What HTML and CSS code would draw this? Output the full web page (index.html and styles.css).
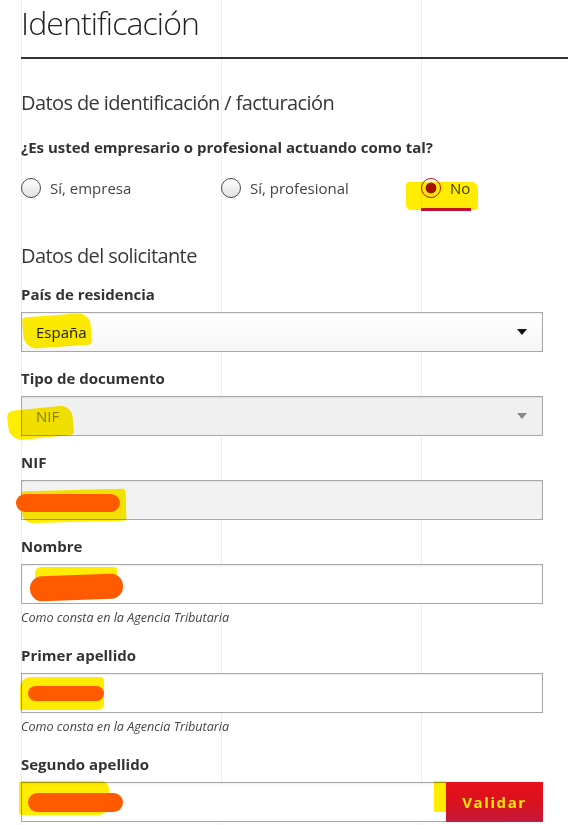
FILE: index.html
```html
<!DOCTYPE html>
<html lang="es">
<head>
<meta charset="utf-8">
<title>Identificación</title>
<link rel="stylesheet" href="styles.css">
</head>
<body>
<div class="page">
  <h1 class="title">Identificación</h1>

  <h2 class="section">Datos de identificación / facturación</h2>
  <p class="question">¿Es usted empresario o profesional actuando como tal?</p>
  <div class="radios">
    <label class="radio"><span class="dot"></span>Sí, empresa</label>
    <label class="radio"><span class="dot"></span>Sí, profesional</label>
    <label class="radio checked"><span class="dot"></span>No</label>
  </div>

  <h2 class="section section-2">Datos del solicitante</h2>

  <div class="field first">
    <div class="label">País de residencia</div>
    <div class="select"><span>España</span><span class="arrow"></span></div>
  </div>

  <div class="field">
    <div class="label">Tipo de documento</div>
    <div class="select disabled"><span>NIF</span><span class="arrow"></span></div>
  </div>

  <div class="field">
    <div class="label">NIF</div>
    <div class="input disabled"></div>
  </div>

  <div class="field">
    <div class="label">Nombre</div>
    <div class="input"></div>
    <div class="hint">Como consta en la Agencia Tributaria</div>
  </div>

  <div class="field">
    <div class="label">Primer apellido</div>
    <div class="input"></div>
    <div class="hint">Como consta en la Agencia Tributaria</div>
  </div>

  <div class="field">
    <div class="label">Segundo apellido</div>
    <div class="input-row">
      <div class="input grow"></div>
      <button class="btn">Validar</button>
    </div>
  </div>

  <div class="marks">
    <span class="hl hl-no"></span>
    <span class="underline-no"></span>
    <span class="hl hl-espana"></span>
    <span class="hl hl-nif"></span>
    <span class="hl hl-nifin"></span>
    <span class="rd rd-nifin"></span>
    <span class="hl hl-nombre"></span>
    <span class="rd rd-nombre"></span>
    <span class="hl hl-primer"></span>
    <span class="rd rd-primer"></span>
    <span class="hl hl-segundo"></span>
    <span class="rd rd-segundo"></span>
    <span class="hl hl-validar"></span>
  </div>
</div>
</body>
</html>
```

FILE: styles.css
```css
html, body {
  margin: 0;
  padding: 0;
  background: #fff;
}

body {
  font-family: "Open Sans", "Liberation Sans", sans-serif;
  color: #333;
  overflow: hidden;
}

.page {
  position: relative;
  height: 825px;
  box-sizing: border-box;
  padding-left: 21px;
  overflow: hidden;
  background-image: linear-gradient(to right, #ededed 0, #ededed 1px, transparent 1px);
  background-size: 200px 100%;
  background-position: 21px 0;
  background-repeat: repeat-x;
}

.title {
  margin: 0;
  padding: 3px 0 14px;
  font-size: 32px;
  line-height: 40px;
  font-weight: 300;
  letter-spacing: -0.9px;
  color: #222;
  border-bottom: 2px solid #333;
}

.section {
  margin: 30px 0 0;
  font-size: 20px;
  line-height: 28px;
  font-weight: 400;
  letter-spacing: -0.6px;
  color: #383838;
}

.section-2 {
  margin-top: 44px;
}

.question {
  margin: 20px 0 0;
  font-size: 15px;
  line-height: 20px;
  font-weight: 700;
  color: #333;
}

.radios {
  display: grid;
  grid-template-columns: 200px 200px auto;
  margin-top: 21px;
}

.radio {
  display: flex;
  align-items: center;
  gap: 9px;
  font-size: 15px;
  line-height: 20px;
  color: #444;
}

.dot {
  width: 20px;
  height: 20px;
  box-sizing: border-box;
  border: 1px solid #4a4a4a;
  border-radius: 50%;
  background: linear-gradient(#ffffff, #e2e2e2);
  flex: none;
}

.checked .dot {
  border-color: #b8141c;
  background: radial-gradient(circle, #a3120a 0, #a3120a 5px, #ffffff 5.8px);
}

.field {
  margin-top: 16px;
  width: 522px;
}

.field.first {
  margin-top: 14px;
}

.label {
  font-size: 15px;
  line-height: 20px;
  font-weight: 700;
  color: #333;
  margin-bottom: 8px;
}

.select,
.input {
  height: 40px;
  box-sizing: border-box;
  border: 1px solid #a8a8a8;
  background: #fff;
  box-shadow: inset 0 1px 2px rgba(0, 0, 0, 0.08);
}

.select {
  display: flex;
  align-items: center;
  justify-content: space-between;
  padding: 0 15px 0 14px;
  font-size: 15px;
  color: #222;
  background: linear-gradient(#ffffff, #f6f6f6);
}

.arrow {
  width: 0;
  height: 0;
  border-left: 5px solid transparent;
  border-right: 5px solid transparent;
  border-top: 6px solid #111;
}

.select.disabled {
  background: #f0f0f0;
  color: #888;
}

.select.disabled .arrow {
  border-top-color: #8a8a8a;
}

.input.disabled {
  background: #f2f2f2;
}

.hint {
  margin-top: 5px;
  padding-bottom: 2px;
  font-size: 12.6px;
  line-height: 18px;
  font-style: italic;
  color: #444;
}

.input-row {
  display: flex;
}

.input.grow {
  flex: 1;
  border-right: none;
}

.btn {
  width: 97px;
  height: 40px;
  border: none;
  margin: 0;
  padding: 0;
  background: linear-gradient(180deg, #e8101a 0%, #d8121f 55%, #c31a3c 100%);
  color: #ffe900;
  font-family: "Open Sans", "Liberation Sans", sans-serif;
  font-weight: 700;
  font-size: 15px;
  letter-spacing: 1.6px;
}

/* annotation marks drawn over the screenshot */
.marks {
  position: absolute;
  inset: 0;
  pointer-events: none;
}

.hl,
.rd,
.underline-no {
  position: absolute;
  display: block;
}

.hl {
  background: #ffec00;
  mix-blend-mode: multiply;
}

.rd {
  background: #ff5a00;
}

.hl-no { left: 406px; top: 182px; width: 72px; height: 28px; border-radius: 3px 6px 3px 5px; }
.underline-no { left: 421px; top: 208px; width: 50px; height: 3px; background: #c4102c; }
.hl-espana { left: 23px; top: 315px; width: 68px; height: 32px; border-radius: 4px 12px 4px 14px; transform: rotate(-4deg); }
.hl-nif { left: 8px; top: 408px; width: 65px; height: 30px; border-radius: 6px 12px 4px 14px; transform: rotate(-6deg); }
.hl-nifin { left: 22px; top: 490px; width: 104px; height: 32px; border-radius: 3px 4px 3px 10px; transform: rotate(-1.5deg); }
.rd-nifin { left: 16px; top: 494px; width: 104px; height: 18px; border-radius: 9px; }
.hl-nombre { left: 35px; top: 567px; width: 82px; height: 15px; border-radius: 6px 3px 2px 2px; }
.rd-nombre { left: 30px; top: 575px; width: 93px; height: 25px; border-radius: 12px; transform: rotate(-2deg); }
.hl-primer { left: 20px; top: 677px; width: 84px; height: 33px; border-radius: 10px 4px 6px 2px; }
.rd-primer { left: 28px; top: 686px; width: 76px; height: 15px; border-radius: 8px; }
.hl-segundo { left: 19px; top: 781px; width: 90px; height: 34px; border-radius: 3px 8px 10px 3px; }
.rd-segundo { left: 28px; top: 793px; width: 95px; height: 19px; border-radius: 10px; }
.hl-validar { left: 434px; top: 781px; width: 12px; height: 31px; }
```
